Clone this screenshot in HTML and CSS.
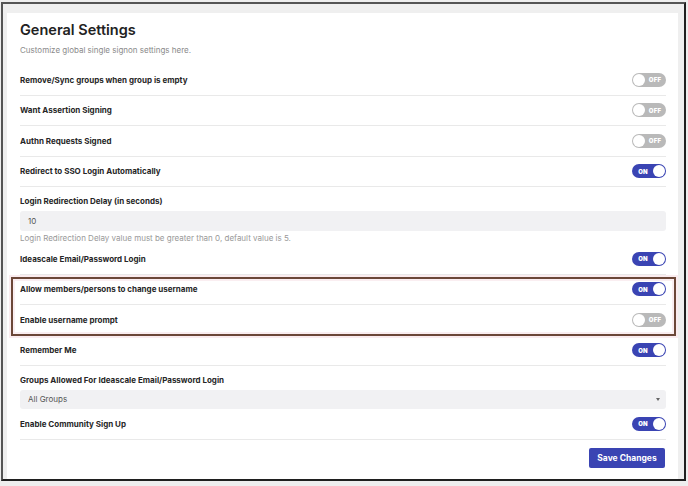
FILE: index.html
```html
<!DOCTYPE html>
<html lang="en">

<head>
    <meta charset="UTF-8">
    <title>General Settings</title>
    <link rel="stylesheet" href="styles.css">
</head>

<body>
    <div class="frame">
        <div class="card">
            <h1 class="title">General Settings</h1>
            <p class="subtitle">Customize global single signon settings here.</p>

            <div class="row">
                <span class="label">Remove/Sync groups when group is empty</span>
                <span class="switch off"><i class="knob"></i><b>OFF</b></span>
            </div>
            <div class="row">
                <span class="label">Want Assertion Signing</span>
                <span class="switch off"><i class="knob"></i><b>OFF</b></span>
            </div>
            <div class="row">
                <span class="label">Authn Requests Signed</span>
                <span class="switch off"><i class="knob"></i><b>OFF</b></span>
            </div>
            <div class="row">
                <span class="label">Redirect to SSO Login Automatically</span>
                <span class="switch on"><b>ON</b><i class="knob"></i></span>
            </div>

            <div class="field">
                <div class="label">Login Redirection Delay (in seconds)</div>
                <div class="input">10</div>
                <div class="help">Login Redirection Delay value must be greater than 0, default value is 5.</div>
            </div>

            <div class="row">
                <span class="label">Ideascale Email/Password Login</span>
                <span class="switch on"><b>ON</b><i class="knob"></i></span>
            </div>

            <div class="highlight">
                <div class="row">
                    <span class="label">Allow members/persons to change username</span>
                    <span class="switch on"><b>ON</b><i class="knob"></i></span>
                </div>
                <div class="row">
                    <span class="label">Enable username prompt</span>
                    <span class="switch off"><i class="knob"></i><b>OFF</b></span>
                </div>
            </div>

            <div class="row">
                <span class="label">Remember Me</span>
                <span class="switch on"><b>ON</b><i class="knob"></i></span>
            </div>

            <div class="field">
                <div class="label">Groups Allowed For Ideascale Email/Password Login</div>
                <div class="input select">All Groups<i class="caret"></i></div>
            </div>

            <div class="row">
                <span class="label">Enable Community Sign Up</span>
                <span class="switch on"><b>ON</b><i class="knob"></i></span>
            </div>

            <div class="actions">
                <button class="btn">Save Changes</button>
            </div>
        </div>
    </div>
</body>

</html>
```

FILE: styles.css
```css
* {
    margin: 0;
    padding: 0;
    box-sizing: border-box;
}

body {
    background: #eeeeee;
    font-family: Inter, "Liberation Sans", sans-serif;
    color: #2b2b2b;
}

.frame {
    display: flex;
    flex-direction: column;
    margin: 2px 2px 0 1px;
    height: 479px;
    border: 2px solid #1f1f1f;
    border-top-color: #555;
    border-left-color: #555;
    background: #efefef;
    padding: 9px 6px 0 4px;
}

.card {
    flex: 1;
    background: #fff;
    padding: 6px 12px 0 13px;
}

.title {
    font-size: 14.5px;
    line-height: 22px;
    font-weight: 600;
    color: #222;
}

.subtitle {
    margin-top: 3px;
    margin-bottom: 9px;
    font-size: 8px;
    line-height: 12px;
    color: #8a8a8a;
}

.label {
    font-size: 8px;
    font-weight: 700;
    color: #262626;
}

.row {
    display: flex;
    justify-content: space-between;
    align-items: center;
    height: 30.5px;
    border-bottom: 1px solid #e9e9e9;
}

.field {
    padding-top: 8px;
}

.field .label {
    line-height: 12px;
    margin-bottom: 4px;
}

.input {
    height: 20px;
    line-height: 20px;
    padding-left: 8px;
    background: #f1f1f3;
    border-radius: 3px;
    font-size: 8px;
    color: #555;
}

.select {
    height: 19px;
    line-height: 19px;
    position: relative;
}

.caret {
    position: absolute;
    right: 6px;
    top: 8px;
    border-left: 2px solid transparent;
    border-right: 2px solid transparent;
    border-top: 3px solid #666;
}

.help {
    margin-top: 1px;
    font-size: 8px;
    line-height: 12px;
    color: #999;
}

.highlight {
    position: relative;
}

.highlight::after {
    content: "";
    position: absolute;
    top: 2px;
    bottom: 0;
    left: -9px;
    right: -10px;
    border: 2px solid #6b4738;
    box-shadow: 0 0 0 2px rgba(240, 200, 210, .35), inset 0 0 0 2px rgba(240, 200, 210, .3);
}

.switch {
    display: flex;
    align-items: center;
    width: 34px;
    height: 14px;
    border-radius: 7px;
    padding: 1px;
    font-size: 6px;
    font-weight: 700;
    color: #fff;
}

.switch b {
    flex: 1;
    text-align: center;
    letter-spacing: .2px;
}

.switch.on {
    background: #3a44b3;
}

.switch.off {
    background: #b9b9b9;
}

.knob {
    width: 12px;
    height: 12px;
    border-radius: 50%;
    background: #fff;
}

.actions {
    display: flex;
    justify-content: flex-end;
    padding-top: 8px;
    padding-right: 1px;
}

.btn {
    width: 76px;
    height: 20px;
    border: none;
    border-radius: 2px;
    background: #3a44b3;
    color: #fff;
    font-family: Inter, "Liberation Sans", sans-serif;
    font-size: 8.5px;
    font-weight: 700;
}
```
